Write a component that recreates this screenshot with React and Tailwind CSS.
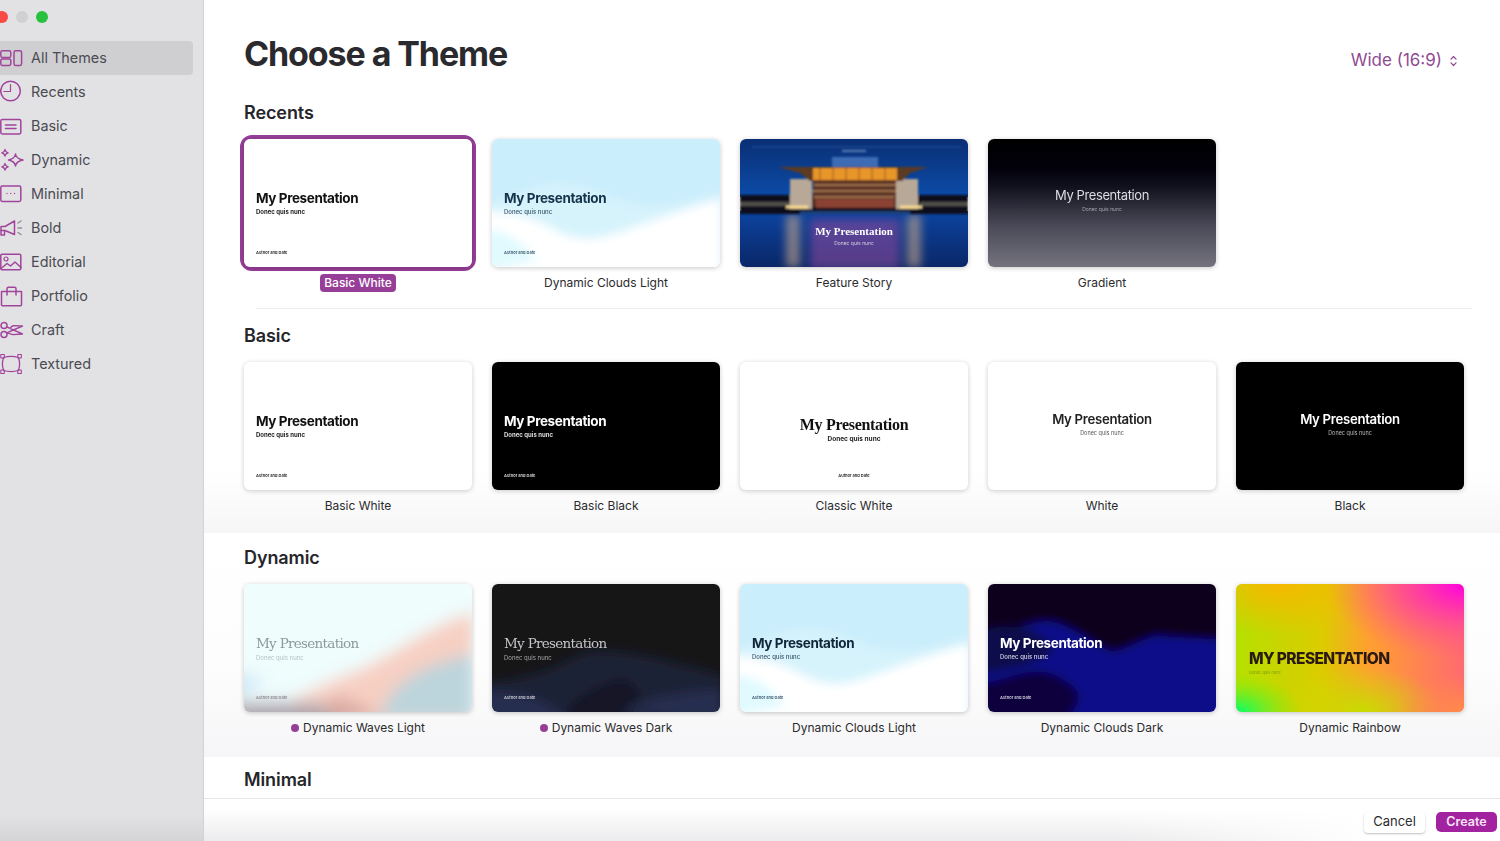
const purple = "#a0459b";

function Svg({ children }) {
  return (
    <svg viewBox="0 0 24 24" fill="none" stroke={purple} strokeWidth="1.5" strokeLinecap="round" strokeLinejoin="round" className="w-6 h-6 shrink-0 mr-[7px]">
      {children}
    </svg>
  );
}

const icons = {
  all: (
    <Svg>
      <rect x="0.8" y="4.8" width="10" height="6.6" rx="1.6" />
      <rect x="0.8" y="13" width="10" height="6.4" rx="1.6" />
      <rect x="14" y="4.8" width="7.6" height="14.6" rx="1.6" />
    </Svg>
  ),
  recents: (
    <Svg>
      <circle cx="10.5" cy="11" r="9.8" />
      <path d="M10.5 4.5v7H3.8" strokeWidth="1.2" />
    </Svg>
  ),
  basic: (
    <Svg>
      <rect x="0.8" y="5.5" width="20" height="14.5" rx="1.4" />
      <path d="M5.5 11h10.5M5.500 14.500h10.500" />
    </Svg>
  ),
  dynamic: (
    <Svg>
      <path d="M15.500 6c.5 3.200 2.200 5 7.500 6-5.300 1-7 2.800-7.500 6-.5-3.200-2.200-5-7-6 4.800-1 6.500-2.800 7-6z" strokeWidth="1.500" />
      <path d="M5 1.500c.3 2 1.200 2.900 3.200 3.300-2 .4-2.900 1.300-3.200 3.300-.3-2-1.200-2.900-3.200-3.300 2-.4 2.900-1.300 3.200-3.300zM5 15.500c.3 2 1.200 2.900 3.200 3.300-2 .4-2.900 1.300-3.200 3.300-.3-2-1.200-2.900-3.200-3.300 2-.4 2.900-1.300 3.200-3.300z" strokeWidth="1.300" />
    </Svg>
  ),
  minimal: (
    <Svg>
      <rect x="0.800" y="4" width="20" height="15.500" rx="1.400" />
      <path d="M7 11.500h.01M10.800 11.500h.01M14.600 11.500h.01" strokeWidth="1.300" />
    </Svg>
  ),
  bold: (
    <Svg>
      <path d="M1 10.500h4l9.500-5.500v13.500L5 14.500H1z" />
      <path d="M1 14.500v4.500h3.500v-4.500" />
      <path d="M18 7l3-2M18 12h3.500M18 16.500l3 2" stroke="#8f8f94" />
    </Svg>
  ),
  editorial: (
    <Svg>
      <rect x="0.800" y="4.200" width="20" height="15.600" rx="1.200" />
      <circle cx="6" cy="9" r="2" strokeWidth="1.200" />
      <path d="M1 18.500l6-5 3.500 2.500 4.500-4 6 5.500" />
    </Svg>
  ),
  portfolio: (
    <Svg>
      <path d="M1.500 7.500h20v13.200a1 1 0 0 1-1 1h-18a1 1 0 0 1-1-1z" />
      <path d="M7 7.500V4.800a1.500 1.500 0 0 1 1.500-1.500h6a1.500 1.500 0 0 1 1.500 1.500v2.700" />
      <path d="M7 7.500v3.500M16 7.500v3.500" />
    </Svg>
  ),
  craft: (
    <Svg>
      <circle cx="4" cy="7.500" r="3" />
      <circle cx="4" cy="16.500" r="3" />
      <path d="M6.800 8.800l15.700 7.200-9.500.6-6.200-1.800L22.500 8l-9.500-.4-3 2.400" strokeWidth="1.400" />
    </Svg>
  ),
  textured: (
    <Svg>
      <path d="M3.500 5.500c5-1.500 10-1.500 15 0 1.500 4.500 1.500 8.500 0 13-5 1.500-10 1.500-15 0-1.500-4.500-1.500-8.500 0-13z" strokeWidth="1.300" />
      <rect x="0.800" y="2.500" width="3.500" height="3.500" strokeWidth="1.100" />
      <rect x="17.800" y="2.500" width="3.500" height="3.500" strokeWidth="1.100" />
      <rect x="0.800" y="18" width="3.500" height="3.500" strokeWidth="1.100" />
      <rect x="17.800" y="18" width="3.500" height="3.500" strokeWidth="1.100" />
    </Svg>
  ),
};

const nav = [
  ["All Themes", "all"],
  ["Recents", "recents"],
  ["Basic", "basic"],
  ["Dynamic", "dynamic"],
  ["Minimal", "minimal"],
  ["Bold", "bold"],
  ["Editorial", "editorial"],
  ["Portfolio", "portfolio"],
  ["Craft", "craft"],
  ["Textured", "textured"],
];

function Art({ children, id, blur = 5 }) {
  return (
    <svg viewBox="0 0 228 128" preserveAspectRatio="none" className="absolute inset-0 w-full h-full">
      <defs>
        <filter id={id} x="-20%" y="-20%" width="140%" height="140%">
          <feGaussianBlur stdDeviation={blur} />
        </filter>
      </defs>
      <g filter={`url(#${id})`}>{children}</g>
    </svg>
  );
}

const cloudsLight = (id) => (
  <Art id={id} blur={5}>
    <rect x="-20" y="-20" width="270" height="170" fill="#cbeefc" />
    <path d="M40 50c30-12 60 0 90 12 20 8 60 8 100-10v90H-10V68z" fill="#d6f3fc" />
    <path d="M-10 72c30 0 55 8 75 20 25 12 40 8 60 2 30-10 70-26 105-34v90H-10z" fill="#fff" />
    <path d="M-10 92c20-4 40 10 55 30l-55 10z" fill="#e0fafe" />
  </Art>
);

const cloudsDark = (id) => (
  <Art id={id} blur={4}>
    <rect x="-20" y="-20" width="270" height="170" fill="#07041c" />
    <path d="M-10 62c20-6 50-28 75-24 25 6 40 24 60 30 25-6 35-18 50-16 15 2 30 2 60 4v80H-10z" fill="#10108a" />
    <path d="M-10 100c40-6 60-26 92 0 16 10 8 22-4 36H-10z" fill="#07063e" />
    <path d="M-10 48c30-10 50-6 70 8 20 12-20 30-70 34z" fill="#0c0a4c" />
  </Art>
);

const wavesLight = (id) => (
  <Art id={id} blur={8}>
    <rect x="-20" y="-20" width="270" height="170" fill="#effdfd" />
    <path d="M20 140c20-24 60-40 100-56 40-20 70-44 110-56v112z" fill="#f7cfc2" />
    <path d="M135 136c8-34 40-56 95-66v66z" fill="#bcd4dc" />
    <path d="M-20 90c15-2 25 0 42 8l-42 24z" fill="#cfe8f6" />
    <path d="M-20 120c50-4 80-2 130 4l-20 24H-20z" fill="#aea6ae" />
    <path d="M90 112c20 4 30 10 50 24H80z" fill="#d9a8a0" />
  </Art>
);

const wavesDark = (id) => (
  <Art id={id} blur={6}>
    <rect x="-20" y="-20" width="270" height="170" fill="#131318" />
    <path d="M-20 140V100c40 0 80-12 110-30 30-8 90 8 140 22v48z" fill="#1b2136" />
    <path d="M70 140c0-20 26-36 60-46 24 10 26 26 0 46z" fill="#151827" />
    <path d="M-20 108c40-2 80 6 100 32H-20z" fill="#252d50" />
    <path d="M130 128c20-14 60-20 100-22v30z" fill="#272e50" />
  </Art>
);

const rainbow = (
  <svg viewBox="0 0 228 128" preserveAspectRatio="none" className="absolute inset-0 w-full h-full">
    <defs>
      <linearGradient id="rb-base" x1="0" y1="0.500" x2="1" y2="0.500">
        <stop offset="0" stopColor="#b5e000" />
        <stop offset="0.380" stopColor="#dccb00" />
        <stop offset="0.580" stopColor="#ffa030" />
        <stop offset="1" stopColor="#ff6a70" />
      </linearGradient>
      <radialGradient id="rb-magenta" cx="1" cy="0" r="0.600">
        <stop offset="0" stopColor="#ff00e0" />
        <stop offset="0.500" stopColor="#ff40a0" stopOpacity="0.700" />
        <stop offset="1" stopColor="#ff6080" stopOpacity="0" />
      </radialGradient>
      <radialGradient id="rb-green" cx="0" cy="1" r="0.300">
        <stop offset="0" stopColor="#00ff70" />
        <stop offset="1" stopColor="#80f000" stopOpacity="0" />
      </radialGradient>
      <radialGradient id="rb-amber" cx="0.180" cy="0" r="0.400">
        <stop offset="0" stopColor="#f7b800" />
        <stop offset="1" stopColor="#f7b800" stopOpacity="0" />
      </radialGradient>
      <radialGradient id="rb-lime" cx="0.550" cy="1" r="0.360">
        <stop offset="0" stopColor="#c8dc00" />
        <stop offset="1" stopColor="#c8dc00" stopOpacity="0" />
      </radialGradient>
      <radialGradient id="rb-orange" cx="1" cy="1" r="0.300">
        <stop offset="0" stopColor="#ff8c48" />
        <stop offset="1" stopColor="#ff8c48" stopOpacity="0" />
      </radialGradient>
    </defs>
    <rect width="228" height="128" fill="url(#rb-base)" />
    <rect width="228" height="128" fill="url(#rb-amber)" />
    <rect width="228" height="128" fill="url(#rb-lime)" />
    <rect width="228" height="128" fill="url(#rb-magenta)" />
    <rect width="228" height="128" fill="url(#rb-orange)" />
    <rect width="228" height="128" fill="url(#rb-green)" />
  </svg>
);

const feature = (
  <svg viewBox="0 0 228 128" preserveAspectRatio="none" className="absolute inset-0 w-full h-full">
    <defs>
      <linearGradient id="fs-sky" x1="0" y1="0" x2="0" y2="1">
        <stop offset="0" stopColor="#0a2f74" />
        <stop offset="1" stopColor="#0c4ca8" />
      </linearGradient>
      <linearGradient id="fs-water" x1="0" y1="0" x2="0" y2="1">
        <stop offset="0" stopColor="#0c44a0" />
        <stop offset="1" stopColor="#0a2768" />
      </linearGradient>
      <filter id="fs-blur">
        <feGaussianBlur stdDeviation="0.900" />
      </filter>
      <filter id="fs-soft">
        <feGaussianBlur stdDeviation="4" />
      </filter>
    </defs>
    <rect width="228" height="58" fill="url(#fs-sky)" />
    <rect y="72" width="228" height="56" fill="url(#fs-water)" />
    <g filter="url(#fs-soft)">
      <rect x="46" y="76" width="14" height="52" fill="#c9a98a" opacity="0.600" />
      <rect x="167" y="76" width="14" height="52" fill="#c9a98a" opacity="0.600" />
      <rect x="70" y="80" width="90" height="50" fill="#8a4a9c" opacity="0.600" />
    </g>
    <g filter="url(#fs-blur)">
      <path d="M12 8h208" stroke="#4a78c0" strokeWidth="0.500" />
      <path d="M102 12h24" stroke="#a8c8ee" strokeWidth="1" />
      <rect x="92" y="18" width="46" height="10" fill="#3c6cb4" />
      <rect x="0" y="56" width="228" height="19" fill="#0a0f1c" />
      <path d="M0 63h50l4 4H0zM180 63h48v4h-48z" fill="#a89e80" opacity="0.450" />
      <path d="M73 41h84v27H73z" fill="#5c3228" />
      <path d="M50 40h22v30H50zM156 40h22v30h-22z" fill="#b8a898" />
      <path d="M38 28h150l-18 6-8 8H70l-10-8z" fill="#5c3a24" />
      <path d="M73 29h84v12H73z" fill="#e8952c" />
      <path d="M80 29v12M93 29v12M106 29v12M119 29v12M132 29v12M145 29v12" stroke="#8a4c1a" strokeWidth="0.800" />
      <path d="M74 46h82M72 52h86M74 58h80" stroke="#e0b070" strokeWidth="1" />
      <path d="M76 60h78v9H76z" fill="#a04a38" opacity="0.700" />
      <path d="M46 68h22M160 68h22" stroke="#f5d890" strokeWidth="3" />
      <rect x="60" y="72" width="110" height="3" fill="#1a3f74" />
    </g>
  </svg>
);

// title, subtitle, author sit on the same column, only the styles change per theme
function Thumb({ t }) {
  return (
    <div className={`relative w-[228px] h-[128px] overflow-hidden rounded-[6px] flex flex-col ${t.pt} ${t.center ? "items-center" : "items-start pl-3"} ${t.bg}`}>
      {t.art}
      <div className={`relative whitespace-nowrap blur-[0.3px] ${t.titleClass}`}>{t.title || "My Presentation"}</div>
      <div className={`relative whitespace-nowrap blur-[0.3px] leading-[8px] ${t.subClass}`}>Donec quis nunc</div>
      {t.author && (
        <div className={`relative mt-auto mb-[11px] whitespace-nowrap blur-[0.2px] leading-[6px] text-[4px] font-semibold ${t.authorClass}`}>Author and Date</div>
      )}
    </div>
  );
}

const whiteCard = "bg-white shadow-[0_1px_5px_rgba(0,0,0,0.2)]";
const softCard = "shadow-[0_1px_5px_rgba(0,0,0,0.22)]";
const leftBold = "text-[13.5px] leading-[18px] font-bold tracking-[-0.4px]";

const basicWhite = { label: "Basic White", pt: "pt-[50px]", bg: whiteCard, author: true, titleClass: `${leftBold} text-[#111]`, subClass: "mt-px text-[6px] font-bold text-[#222]", authorClass: "text-[#222]" };

const cloudsLightA = { label: "Dynamic Clouds Light", pt: "pt-[50px]", bg: softCard, art: cloudsLight("cl-a"), author: true, titleClass: `${leftBold} text-[#14324a]`, subClass: "mt-px text-[6px] font-medium text-[#3a566c]", authorClass: "text-[#3a566c] font-normal" };

const recents = [
  { ...basicWhite, selected: true },
  cloudsLightA,
  { label: "Feature Story", pt: "pt-[83px]", center: true, bg: softCard, art: feature, titleClass: "font-['Liberation_Serif',serif] text-[11px] leading-[18px] font-bold text-white", subClass: "mt-[-1px] text-[5px] text-[#cfcfe0]" },
  { label: "Gradient", pt: "pt-[47px]", center: true, bg: `${softCard} bg-[linear-gradient(to_bottom,#000_0%,#02010c_24%,#12121f_38%,#4a4a58_68%,#74737e_100%)]`, titleClass: "text-[13px] leading-[18px] tracking-[-0.4px] text-[#dcdce2]", subClass: "mt-px text-[5px] text-[#a5a5b0]" },
];

const basic = [
  { ...basicWhite },
  { label: "Basic Black", pt: "pt-[50px]", bg: "bg-black shadow-[0_1px_5px_rgba(0,0,0,0.2)]", author: true, titleClass: `${leftBold} text-white`, subClass: "mt-px text-[6px] font-bold text-[#ddd]", authorClass: "text-[#ddd]" },
  { label: "Classic White", pt: "pt-[53px]", center: true, bg: whiteCard, author: true, titleClass: "font-['Liberation_Serif',serif] text-[16px] leading-[20px] font-bold tracking-[-0.3px] text-[#111]", subClass: "mt-0 text-[6.5px] font-bold text-[#222]", authorClass: "text-[#222]" },
  { label: "White", pt: "pt-[48px]", center: true, bg: whiteCard, titleClass: "text-[13.2px] leading-[18px] font-semibold tracking-[-0.3px] text-[#222]", subClass: "mt-px text-[5.5px] text-[#555]" },
  { label: "Black", pt: "pt-[48px]", center: true, bg: "bg-black shadow-[0_1px_5px_rgba(0,0,0,0.2)]", titleClass: "text-[13.2px] leading-[18px] font-semibold tracking-[-0.3px] text-white", subClass: "mt-px text-[5.5px] text-[#bbb]" },
];

const dynamic = [
  { label: "Dynamic Waves Light", dot: true, pt: "pt-[49px]", bg: softCard, art: wavesLight("wl"), author: true, titleClass: "font-['DejaVu_Serif',serif] text-[13.5px] leading-[20px] font-light tracking-[-0.7px] text-[#8d9a9c]", subClass: "mt-px text-[6px] text-[#b4c2c4]", authorClass: "text-[#8f8a92]" },
  { label: "Dynamic Waves Dark", dot: true, pt: "pt-[49px]", bg: softCard, art: wavesDark("wd"), author: true, titleClass: "font-['DejaVu_Serif',serif] text-[13.5px] leading-[20px] font-light tracking-[-0.7px] text-[#c4c4c8]", subClass: "mt-px text-[6px] text-[#a8a8ae]", authorClass: "text-[#ccccd4]" },
  { ...cloudsLightA, art: cloudsLight("cl-b"), titleClass: `${leftBold} text-[#10263a]` },
  { label: "Dynamic Clouds Dark", pt: "pt-[50px]", bg: softCard, art: cloudsDark("cd"), author: true, titleClass: `${leftBold} text-white`, subClass: "mt-px text-[6px] font-medium text-[#d8d8e8]", authorClass: "text-[#d0d0e0] font-normal" },
  { label: "Dynamic Rainbow", title: "MY PRESENTATION", pt: "pt-[66px]", bg: softCard, art: rainbow, titleClass: "ml-px text-[15.5px] leading-[18px] font-extrabold tracking-[-0.6px] text-[#2a1a10]", subClass: "ml-px mt-px text-[4px] text-[#7a9a10]" },
];

function Card({ t }) {
  return (
    <div className="w-[228px] flex flex-col items-center">
      <div className={t.selected ? "rounded-[8px] outline-[4px] outline-solid outline-offset-[0.5px] outline-[#963e98]" : ""}>
        <Thumb t={t} />
      </div>
      <div className="mt-[7px] h-[18px] flex items-center">
        {t.selected ? (
          <span className="px-[4px] h-[18px] flex items-center rounded-[4px] bg-[#963e98] text-white text-[12px] font-medium">{t.label}</span>
        ) : (
          <span className="flex items-center text-[12px] text-[#2b2b2e]">
            {t.dot && <span className="w-[8px] h-[8px] rounded-full bg-[#963e98] mr-[4px]" />}
            {t.label}
          </span>
        )}
      </div>
    </div>
  );
}

function Section({ title, items, className }) {
  return (
    <section className={`pl-10 ${className}`}>
      <h2 className="h-6 flex items-center text-[18px] font-semibold tracking-[-0.1px] text-[#26262a]">{title}</h2>
      {items && (
        <div className="mt-[15px] flex gap-5">
          {items.map((t, i) => (
            <Card key={i} t={t} />
          ))}
        </div>
      )}
    </section>
  );
}

export default function App() {
  return (
    <div className="w-[1500px] h-[841px] flex overflow-hidden bg-white font-[Inter,sans-serif]">
      <aside className="w-[204px] shrink-0 flex flex-col border-r border-[#d2d2d5] bg-[linear-gradient(to_bottom,#e2e2e5_0%,#e2e2e5_97%,#d4d4d7_100%)]">
        <div className="h-[41px] shrink-0 flex items-start pt-[11px] gap-2 ml-[-4px]">
          <span className="w-3 h-3 rounded-full bg-[#fb4b46]" />
          <span className="w-3 h-3 rounded-full bg-[#d0d0d2]" />
          <span className="w-3 h-3 rounded-full bg-[#27c13f]" />
        </div>
        <nav className="flex flex-col">
          {nav.map(([label, icon], i) => (
            <div key={label} className={`w-[193px] h-[34px] flex items-center rounded-r-[4px] text-[14.4px] text-[#4b4b52] ${i === 0 ? "bg-[#cfcfd2]" : ""}`}>
              {icons[icon]}
              {label}
            </div>
          ))}
        </nav>
      </aside>

      <main className="flex-1 min-w-0 flex flex-col">
        <div className="flex-1 min-h-0 overflow-hidden">
          <header className="h-[100px] pl-10 pr-[43px] pt-[34px] flex items-start justify-between">
            <h1 className="text-[34px] leading-[40px] font-bold tracking-[-1.1px] text-[#2a2a2e]">Choose a Theme</h1>
            <button className="mt-[9px] h-[36px] flex items-center gap-[8px] text-[17px] text-[#8f4a93]">
              Wide (16:9)
              <svg viewBox="0 0 7 14" className="w-[7px] h-[14px]" fill="none" stroke="#8f4a93" strokeWidth="1.200" strokeLinecap="round" strokeLinejoin="round">
                <path d="M1 5.200L3.500 2.500 6 5.200M1 8.800l2.500 2.700L6 8.800" />
              </svg>
            </button>
          </header>
          <Section title="Recents" items={recents} />
          <div className="mt-4 ml-[52px] mr-7 h-px bg-[#ececee]" />
          <Section title="Basic" items={basic} className="pt-[14px] pb-[18px] bg-[linear-gradient(to_bottom,#fff_0%,#fff_72%,#f6f6f7_100%)]" />
          <Section title="Dynamic" items={dynamic} className="pt-3 pb-5 bg-[linear-gradient(to_bottom,#fff_0%,#fdfdfd_60%,#f6f5f7_100%)]" />
          <Section title="Minimal" className="pt-[10px]" />
        </div>
        <footer className="h-[43px] shrink-0 border-t border-[#e6e6e8] flex items-center justify-end gap-[11px] pr-[3px] pt-1 bg-[linear-gradient(to_right,transparent_70%,#fff_90%),linear-gradient(to_bottom,#fff_25%,#ebebed_100%)]">
          <button className="w-[61px] h-[21px] flex items-center justify-center rounded-[4px] bg-white shadow-[0_1px_2px_rgba(0,0,0,0.25)] text-[13px] text-[#2b2b2e]">Cancel</button>
          <button className="w-[61px] h-[20px] flex items-center justify-center rounded-[5px] bg-[#a3229f] text-[12.5px] font-semibold text-[#f6e6f6]">Create</button>
        </footer>
      </main>
    </div>
  );
}
